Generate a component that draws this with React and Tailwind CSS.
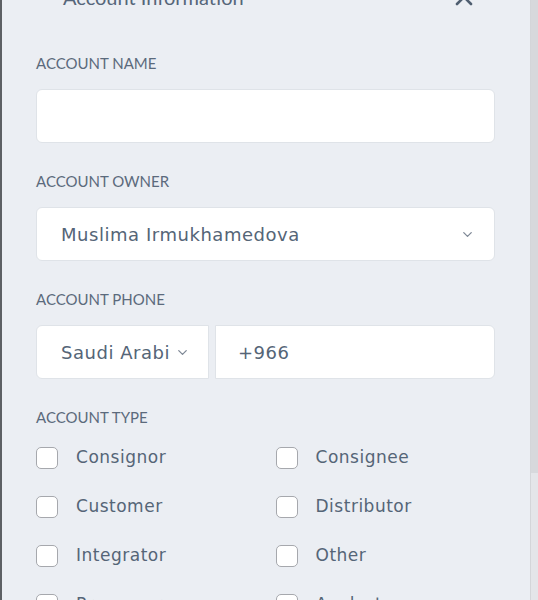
import { ChevronDown } from 'lucide-react';

const labelFont = { fontFamily: 'Lato, "Liberation Sans", sans-serif' };
const fieldFont = { fontFamily: '"DejaVu Sans", "Open Sans", sans-serif' };

const Label = ({ children, mb = 'mb-[17px]' }) => (
  <p
    className={`text-[15px] leading-[18px] uppercase text-[#5b6a7c] ${mb}`}
    style={labelFont}
  >
    {children}
  </p>
);

const Checkbox = ({ label }) => (
  <label className="flex items-center gap-[18px] h-[22px]">
    <span className="w-[22px] h-[22px] rounded-[5px] border border-[#a6a8ad] bg-white shrink-0" />
    <span className="text-[17px] tracking-[0.03em] text-[#556577]" style={fieldFont}>
      {label}
    </span>
  </label>
);

const types = [
  'Consignor',
  'Consignee',
  'Customer',
  'Distributor',
  'Integrator',
  'Other',
  'Processor',
  'Analyst',
];

export default function App() {
  return (
    <div className="flex h-[600px] w-full overflow-hidden bg-[#ebeef3]">
      <div className="w-[2px] bg-[#5d6064] shrink-0" />

      <div className="flex-1 pl-[34px] pr-[35px]">
        <div className="flex items-center justify-between h-[24px] -mt-[15px] pl-[27px] pr-[22px]">
          <h2 className="text-[20px] leading-[24px] text-[#56667a]" style={labelFont}>
            Account Information
          </h2>
          <svg width="18" height="18" viewBox="0 0 18 18" className="text-[#4f5e70]">
            <path d="M2 2 16 16M16 2 2 16" stroke="currentColor" strokeWidth="2.6" strokeLinecap="round" />
          </svg>
        </div>

        <div className="mt-[45px] flex flex-col gap-[29px]">
          <div>
            <Label>Account Name</Label>
            <div className="h-[54px] rounded-[6px] border border-[#dfe3e8] bg-white" />
          </div>

          <div>
            <Label>Account Owner</Label>
            <div className="h-[54px] rounded-[6px] border border-[#dfe3e8] bg-white flex items-center pl-[24px] pr-[19px]">
              <span className="flex-1 text-[18px] tracking-[0.03em] text-[#556577]" style={fieldFont}>
                Muslima Irmukhamedova
              </span>
              <ChevronDown size={15} strokeWidth={2.1} className="text-[#7e8896]" />
            </div>
          </div>

          <div>
            <Label>Account Phone</Label>
            <div className="flex gap-[6px] h-[54px]">
              <div className="w-[173px] rounded-l-[6px] border border-[#dfe3e8] bg-white flex items-center pl-[24px] pr-[18px] gap-[6px]">
                <span
                  className="flex-1 overflow-hidden whitespace-nowrap text-[18px] tracking-[0.03em] text-[#556577]"
                  style={fieldFont}
                >
                  Saudi Arabia
                </span>
                <ChevronDown size={15} strokeWidth={2.1} className="text-[#7e8896] shrink-0" />
              </div>
              <div className="flex-1 rounded-r-[6px] border border-[#dfe3e8] bg-white flex items-center pl-[22px]">
                <span className="text-[18px] tracking-[0.03em] text-[#556577]" style={fieldFont}>
                  +966
                </span>
              </div>
            </div>
          </div>

          <div>
            <Label mb="mb-[21px]">Account Type</Label>
            <div className="grid grid-cols-2 gap-y-[27px] gap-x-[20px]">
              {types.map((t) => (
                <Checkbox key={t} label={t} />
              ))}
            </div>
          </div>
        </div>
      </div>

      <div className="w-[8px] shrink-0 bg-[#e4e5e9] border-l border-[#d4d5d9]">
        <div className="h-[473px] bg-[#d7d8dc]" />
      </div>
    </div>
  );
}
